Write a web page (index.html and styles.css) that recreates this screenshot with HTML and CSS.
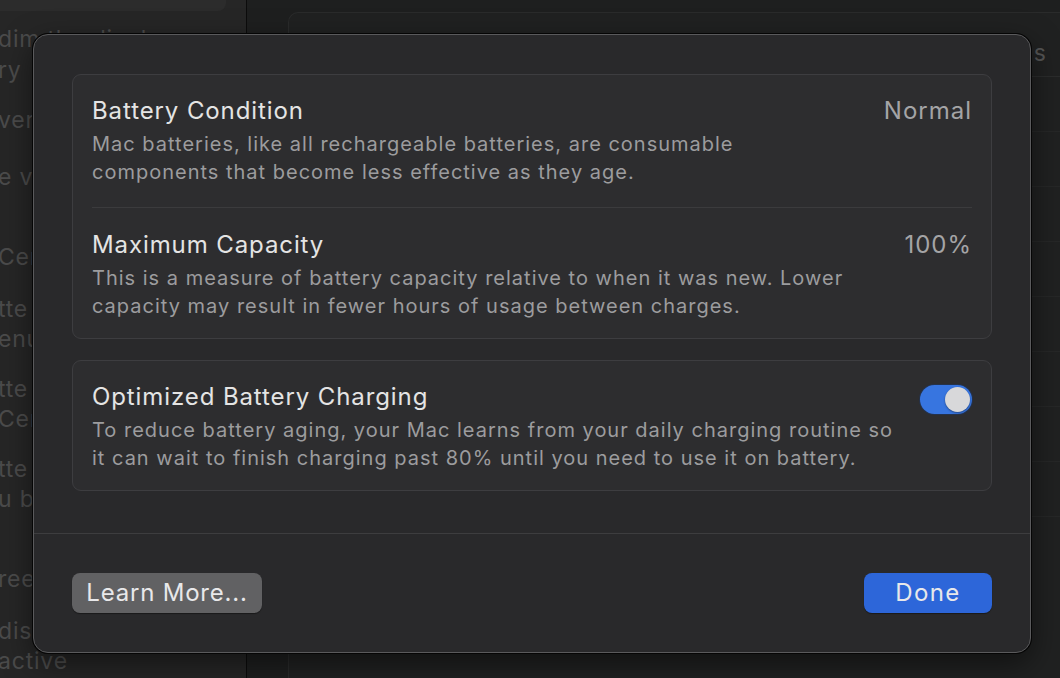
FILE: index.html
```html
<!DOCTYPE html>
<html>
<head>
<meta charset="utf-8">
<link rel="stylesheet" href="styles.css">
</head>
<body>
<div class="app">
  <aside class="sidebar">
    <div class="side-top"></div>
    <div class="side-text">
      <p class="s1">dim the display</p>
      <p class="s2">ry</p>
      <p class="s3">ver</p>
      <p class="s4">e vi</p>
      <p class="s5">Cer</p>
      <p class="s6">tte<br>enu</p>
      <p class="s7">tte<br>Cer</p>
      <p class="s8">tte<br>u b</p>
      <p class="s9">ree</p>
      <p class="s10">dis<br>active</p>
    </div>
  </aside>
  <main class="main">
    <div class="main-card">
      <div class="main-head"><span class="head-s">s</span></div>
      <div class="grid-rows">
        <div class="grid-row"></div>
        <div class="grid-row"></div>
        <div class="grid-row"></div>
        <div class="grid-row"></div>
        <div class="grid-row"></div>
        <div class="grid-row"></div>
        <div class="grid-row"></div>
        <div class="grid-row"></div>
      </div>
    </div>
  </main>
</div>

<div class="dialog">
  <div class="dialog-body">
    <section class="group">
      <div class="row row-first">
        <div class="row-text">
          <div class="title">Battery Condition</div>
          <div class="desc">Mac batteries, like all rechargeable batteries, are consumable<br>components that become less effective as they age.</div>
        </div>
        <div class="value">Normal</div>
      </div>
      <div class="sep"></div>
      <div class="row row-last row-after-sep">
        <div class="row-text">
          <div class="title">Maximum Capacity</div>
          <div class="desc">This is a measure of battery capacity relative to when it was new. Lower<br>capacity may result in fewer hours of usage between charges.</div>
        </div>
        <div class="value">100%</div>
      </div>
    </section>
    <section class="group group-2">
      <div class="row row-last">
        <div class="row-text">
          <div class="title">Optimized Battery Charging</div>
          <div class="desc">To reduce battery aging, your Mac learns from your daily charging routine so<br>it can wait to finish charging past 80% until you need to use it on battery.</div>
        </div>
        <div class="toggle"><div class="knob"></div></div>
      </div>
    </section>
  </div>
  <div class="footer">
    <button class="btn btn-secondary">Learn More...</button>
    <button class="btn btn-primary">Done</button>
  </div>
</div>
</body>
</html>
```

FILE: styles.css
```css
* { box-sizing: border-box; margin: 0; padding: 0; }

html, body {
  width: 1060px;
  height: 678px;
  overflow: hidden;
  background: #1e1f1f;
  font-family: Inter, "Noto Sans", "Liberation Sans", sans-serif;
}

.app {
  display: flex;
  width: 1060px;
  height: 678px;
}

.sidebar {
  width: 247px;
  flex: none;
  background: #262626;
  border-right: 1px solid #0c0c0c;
  position: relative;
  overflow: hidden;
}

.side-top {
  position: absolute;
  left: -20px;
  top: -20px;
  width: 246px;
  height: 31px;
  background: #2c2c2c;
  border-radius: 8px;
}

.side-text {
  color: #4b4b4b;
  font-size: 23px;
  line-height: 30px;
  padding-top: 24px;
  margin-left: -2px;
  letter-spacing: 0.8px;
}

.side-text p { white-space: nowrap; }
.s2 { margin-top: 1px; }
.s3 { margin-top: 20px; }
.s4 { margin-top: 27px; }
.s5 { margin-top: 50px; }
.s6 { margin-top: 22px; }
.s7 { margin-top: 20px; }
.s8 { margin-top: 20px; }
.s9 { margin-top: 50px; }
.s10 { margin-top: 22px; }

.main {
  flex: 1;
  padding: 12px 0 0 41px;
  overflow: hidden;
}

.main-card {
  height: 700px;
  border: 1px solid #2a2b2b;
  border-right: none;
  border-radius: 10px 0 0 0;
  background: #202121;
}

.main-head {
  height: 64px;
  border-bottom: 1px solid #2b2c2c;
  display: flex;
  justify-content: flex-end;
  align-items: center;
  padding-right: 14px;
}

.head-s {
  color: #555;
  font-size: 23px;
  padding-top: 16px;
}

.grid-rows {
  display: flex;
  flex-direction: column;
}

.grid-row {
  height: 55px;
  border-bottom: 1px solid #262727;
}

/* Dialog */
.dialog {
  position: absolute;
  left: 33px;
  top: 34px;
  width: 998px;
  height: 619px;
  background: #29292b;
  border-radius: 15px;
  border: 1px solid #5a5a5c;
  box-shadow: 0 0 0 1px #050505, 0 10px 30px rgba(0, 0, 0, 0.5);
  display: flex;
  flex-direction: column;
}

.dialog-body {
  padding: 39px 38px 42px;
  display: flex;
  flex-direction: column;
  gap: 21px;
  border-bottom: 1px solid #3d3d3f;
}

.group {
  background: #2d2d2f;
  border: 1px solid #3d3d40;
  border-radius: 9px;
}

.row {
  display: flex;
  justify-content: space-between;
  align-items: flex-start;
  padding: 21px 19px 20px 19px;
}

.row-first { padding-bottom: 21px; }
.row-after-sep { padding-top: 22px; }
.row-last { padding-bottom: 18px; }

.sep {
  height: 1px;
  background: #3b3b3d;
  margin: 0 19px;
}

.title {
  color: #e4e4e4;
  font-size: 24px;
  line-height: 30px;
  letter-spacing: 0.9px;
}

.desc {
  color: #9c9c9e;
  font-size: 20px;
  line-height: 28px;
  margin-top: 4px;
  white-space: nowrap;
  letter-spacing: 1px;
}

.value {
  color: #a4a4a6;
  font-size: 24px;
  line-height: 30px;
  letter-spacing: 1px;
}

.toggle {
  width: 52px;
  height: 29px;
  margin-top: 3px;
  border-radius: 15px;
  background: #3775e0;
  position: relative;
  box-shadow: 0 0 0 1px #24324c;
}

.knob {
  position: absolute;
  right: 2px;
  top: 2px;
  width: 25px;
  height: 25px;
  border-radius: 50%;
  background: #d8d8da;
  box-shadow: 0 1px 2px rgba(0, 0, 0, 0.4);
}

.footer {
  flex: 1;
  display: flex;
  justify-content: space-between;
  align-items: center;
  padding: 0 38px 1px;
}

.btn {
  height: 40px;
  border: none;
  border-radius: 8px;
  font-family: Inter, "Noto Sans", "Liberation Sans", sans-serif;
  font-size: 24px;
  line-height: 40px;
  color: #e8e8ea;
  letter-spacing: 0.8px;
}

.btn-secondary {
  width: 190px;
  background: #616163;
  box-shadow: 0 1px 1px rgba(0, 0, 0, 0.4);
}

.btn-primary {
  width: 128px;
  background: #2d66d9;
  box-shadow: 0 1px 1px rgba(0, 0, 0, 0.4);
  letter-spacing: 1.4px;
}
```
